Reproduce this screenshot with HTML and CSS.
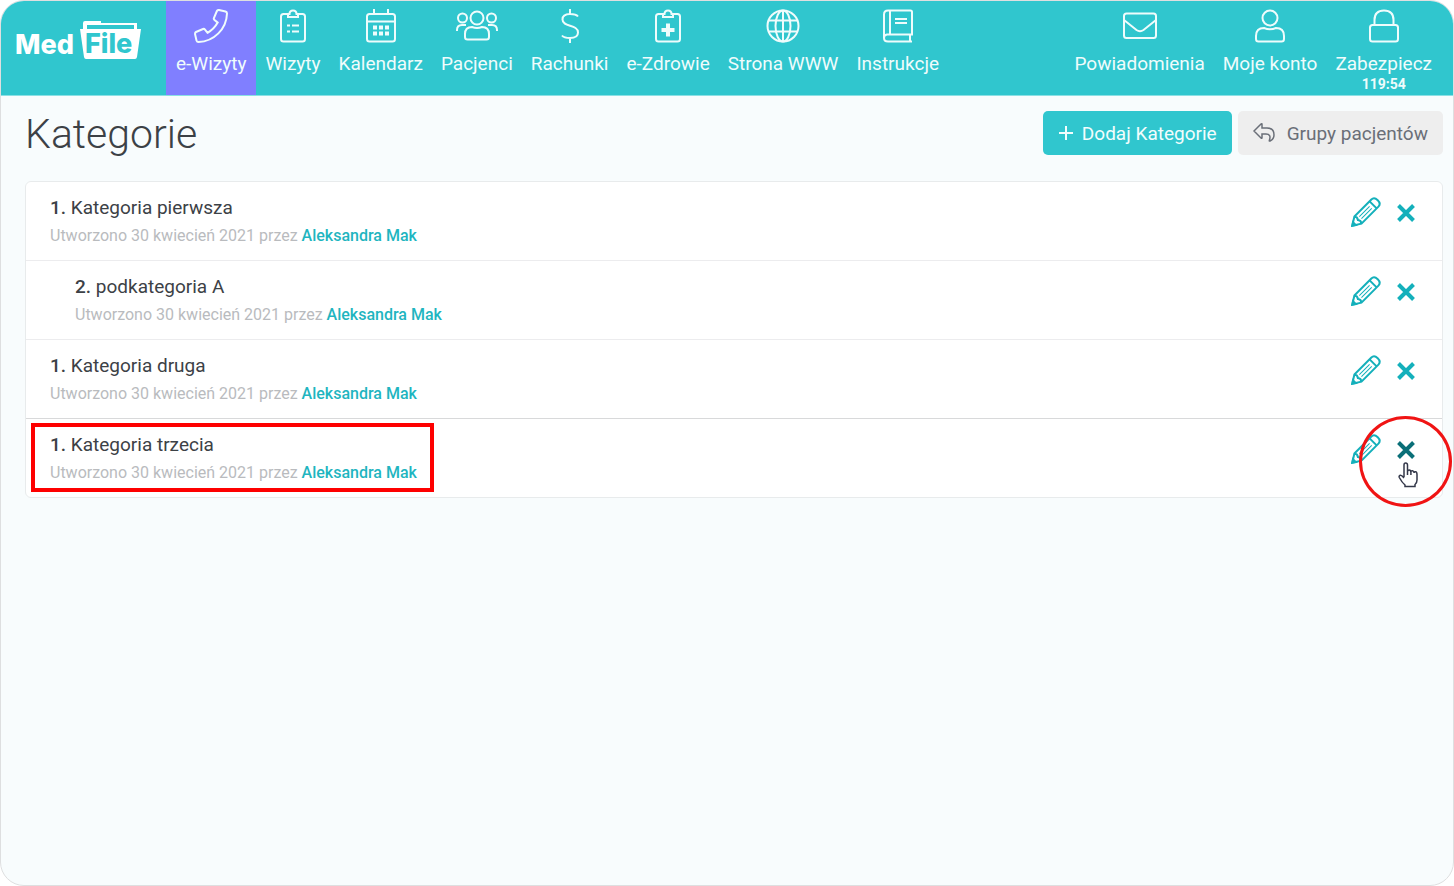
FILE: index.html
```
<!DOCTYPE html>
<html lang="pl">
<head>
<meta charset="utf-8">
<title>MedFile – Kategorie</title>
<link rel="stylesheet" href="styles.css">
</head>
<body>
<svg class="defs" aria-hidden="true">
  <symbol id="pencil" viewBox="0 0 30 30">
    <g transform="rotate(45 15 15)">
      <path d="M10 1q0-4 5-4t5 4V25l-5 8-5-8z M10 3.500h10M10 25q2.500-2 5 0 2.500-2 5 0"/>
      <path class="thin" d="M13.500 7v14.500M16.500 7v14.500"/>
      <path class="fill" d="M13 30h4l-2 3z"/>
    </g>
  </symbol>
  <symbol id="cross" viewBox="0 0 20 20"><path d="M2.500 2.500L17.500 17.500M17.500 2.500L2.500 17.500"/></symbol>
</svg>
<div class="app">
  <header class="topbar">
    <a class="logo" href="#" aria-label="MedFile">
      <svg width="126" height="42" viewBox="0 0 126 42">
        <path fill="#fff" d="M67 4q0-2 2-2h16v2h36v6h4l-4 28q-.4 2-2 2H70q-1.600 0-2-2L64 10h3z"/>
        <path fill="#30c6ce" d="M71 6h47v4H71z"/>
        <text class="logo-text med" x="-1" y="35">Med</text>
        <text class="logo-text file" x="69" y="34">File</text>
      </svg>
    </a>
    <nav class="nav">
      <a class="item active" href="#"><svg class="icon" viewBox="0 0 34 34"><path d="M25 1l6.500 1.500q1.500.5 1.500 2C32.500 20 20 32.500 4.500 33q-1.500 0-2-1.500L1 25q0-1.500 1-2l7-3q1.200-.4 2 .6l2.500 3.200q6.500-3.500 10.200-10.200L20.500 11q-1-.8-.6-2l3-7q.6-1.200 2.100-1z"/></svg><span>e-Wizyty</span></a>
      <a class="item" href="#"><svg class="icon" viewBox="0 0 34 34"><path d="M12 5H7.500Q5 5 5 7.500V30q0 2.500 2.500 2.500h19Q29 32.500 29 30V7.500Q29 5 26.500 5H22M12 5v3h10V5h-1.500q0-3.500-3.500-3.500T13.500 5z"/><path d="M11 16.500h3M16 16.500h7M11 22.500h3M16 22.500h7"/></svg><span>Wizyty</span></a>
      <a class="item" href="#"><svg class="icon" viewBox="0 0 34 34"><rect x="3" y="5" width="28" height="27.500" rx="2.500"/><path d="M3 12.500h28M10 0v5M24 0v5"/><path class="thick" d="M9 18.500h4M15 18.500h4M21 18.500h4M9 24.500h4M15 24.500h4M21 24.500h4"/></svg><span>Kalendarz</span></a>
      <a class="item" href="#"><svg class="icon wide" viewBox="0 0 42 34"><circle cx="21" cy="9" r="6.500"/><circle cx="6.500" cy="9" r="4.500"/><circle cx="35.500" cy="9" r="4.500"/><path d="M9 28v-3q0-7 7-7 5 2 10 0 7 0 7 7v3q0 2.500-2.500 2.500h-19Q9 30.500 9 28zM1 22v-1q0-5 5-5h4M41 22v-1q0-5-5-5h-4"/></svg><span>Pacjenci</span></a>
      <a class="item" href="#"><svg class="icon" viewBox="0 0 34 34"><path d="M17 0v5M17 29v5M25 7.500Q23 5 17 5 9.500 5 9.500 10.500c0 8 15.500 4.500 15.500 13Q25 29 17 29q-6 0-8-2.500"/></svg><span>Rachunki</span></a>
      <a class="item" href="#"><svg class="icon" viewBox="0 0 34 34"><path d="M12 5H7.500Q5 5 5 7.500V30q0 2.500 2.500 2.500h19Q29 32.500 29 30V7.500Q29 5 26.500 5H22M12 5v3h10V5h-1.500q0-3.500-3.500-3.500T13.500 5z"/><path class="thick" d="M17 14.500v13M10.500 21h13"/></svg><span>e-Zdrowie</span></a>
      <a class="item" href="#"><svg class="icon" viewBox="0 0 34 34"><circle cx="17" cy="17" r="15.500"/><ellipse cx="17" cy="17" rx="7.500" ry="15.500"/><path d="M17 1.500v31M2.500 11.500h29M2.500 22.500h29"/></svg><span>Strona WWW</span></a>
      <a class="item" href="#"><svg class="icon" viewBox="0 0 34 34"><path d="M7 1.500h22.500Q31 1.500 31 3v22.500H6Q3 26 3 29V5.500Q3 1.500 7 1.500zM9 1.500v24M3 29q0 3.500 4 3.500h24M29 25.500v7"/><path d="M14 10h12M14 14h12"/></svg><span>Instrukcje</span></a>
    </nav>
    <nav class="nav nav-end">
      <a class="item" href="#"><svg class="icon" viewBox="0 0 34 34"><rect x="1" y="4.500" width="32" height="24.500" rx="2.500"/><path d="M1 11l12.500 10q3.500 2.500 7 0L33 11"/></svg><span>Powiadomienia</span></a>
      <a class="item" href="#"><svg class="icon" viewBox="0 0 34 34"><circle cx="17" cy="9" r="7.500"/><path d="M3 30v-3q0-8 8-8 6 2.500 12 0 8 0 8 8v3q0 2.500-2.500 2.500h-23Q3 32.500 3 30z"/></svg><span>Moje konto</span></a>
      <a class="item" href="#"><svg class="icon" viewBox="0 0 34 34"><rect x="3" y="16" width="28" height="16.500" rx="2.500"/><path d="M7.500 16v-5q0-9.500 9.500-9.500T26.500 11v5"/></svg><span>Zabezpiecz</span><b class="timer">119:54</b></a>
    </nav>
  </header>
  <main class="page">
    <div class="heading">
      <h1>Kategorie</h1>
      <div class="actions">
        <button class="btn primary" type="button"><svg width="16" height="16" viewBox="0 0 16 16"><path d="M8 1v14M1 8h14"/></svg>Dodaj Kategorie</button>
        <button class="btn" type="button"><svg class="reply" width="22" height="22" viewBox="0 0 22 22"><path d="M1 9L8 2q1-.8 1 .6V6h5q7 0 7 7 0 4-4 6-1 .4-.6-.8Q18.500 12 13 12H9v3.500q0 1.400-1 .5z"/></svg>Grupy pacjentów</button>
      </div>
    </div>
    <ul class="list">
      <li class="row">
        <div class="info"><p class="title"><b>1.</b> Kategoria pierwsza</p><p class="meta">Utworzono 30 kwiecień 2021 przez <a href="#">Aleksandra Mak</a></p></div>
        <div class="tools"><button type="button" aria-label="Edytuj"><svg class="pencil"><use href="#pencil"/></svg></button><button type="button" aria-label="Usuń"><svg class="cross"><use href="#cross"/></svg></button></div>
      </li>
      <li class="row">
        <div class="info nested"><p class="title"><b>2.</b> podkategoria A</p><p class="meta">Utworzono 30 kwiecień 2021 przez <a href="#">Aleksandra Mak</a></p></div>
        <div class="tools"><button type="button" aria-label="Edytuj"><svg class="pencil"><use href="#pencil"/></svg></button><button type="button" aria-label="Usuń"><svg class="cross"><use href="#cross"/></svg></button></div>
      </li>
      <li class="row">
        <div class="info"><p class="title"><b>1.</b> Kategoria druga</p><p class="meta">Utworzono 30 kwiecień 2021 przez <a href="#">Aleksandra Mak</a></p></div>
        <div class="tools"><button type="button" aria-label="Edytuj"><svg class="pencil"><use href="#pencil"/></svg></button><button type="button" aria-label="Usuń"><svg class="cross"><use href="#cross"/></svg></button></div>
      </li>
      <li class="row">
        <div class="info"><p class="title"><b>1.</b> Kategoria trzecia</p><p class="meta">Utworzono 30 kwiecień 2021 przez <a href="#">Aleksandra Mak</a></p></div>
        <div class="tools"><button type="button" aria-label="Edytuj"><svg class="pencil"><use href="#pencil"/></svg></button><button class="hovered" type="button" aria-label="Usuń"><svg class="cross"><use href="#cross"/></svg></button></div>
        <span class="mark-box"></span>
        <span class="mark-circle"></span>
        <svg class="pointer" width="20" height="26" viewBox="0 0 20 26"><path d="M6 15V3q0-2 1.700-2T9.500 3v7q0-2 1.700-2t1.700 2.500q0-2 1.600-1.800t1.600 2.300q.2-1.500 1.500-1.300T19 12.500V18q0 3-2 4.500V24.500H7V23Q4 20.500 1.300 15.500q-.6-1.500.7-2.200 1.500-.5 4 2.700M9.500 9v4M12.900 10v3"/></svg>
      </li>
    </ul>
  </main>
</div>
</body>
</html>
```
FILE: styles.css
```
* { box-sizing: border-box; }
body { margin: 0; background: #fff; font-family: Roboto, "Liberation Sans", sans-serif; font-size: 19px; color: #3c4146; }
a { text-decoration: none; }
button { font: inherit; border: 0; cursor: pointer; }
svg { fill: none; stroke: currentColor; display: block; flex: none; }
.defs { position: absolute; width: 0; height: 0; }

.app { min-height: 100vh; border: 1px solid #dedfe0; border-radius: 24px; background: #f8fcfd; overflow: hidden; }

.topbar { display: flex; min-height: 95px; padding-right: 12px; background: #30c6ce; border-bottom: 1px solid #8be0e4; }
.logo { width: 165px; padding: 18px 0 0 15px; }
.logo svg { stroke: none; }
.logo-text { font-family: Inter, "Open Sans", sans-serif; font-size: 27px; font-weight: 800; }
.logo-text.med { fill: #fff; }
.logo-text.file { fill: #30c6ce; }
.nav { display: flex; }
.nav-end { margin-left: auto; }
.item { display: flex; flex-direction: column; align-items: center; padding: 8px 9px 0; color: #effcfc; line-height: 24px; white-space: nowrap; }
.item.active { padding-left: 10px; padding-right: 10px; background: #807fff; }
.icon { width: 34px; height: 34px; margin-bottom: 9px; stroke-width: 2; }
.icon.wide { width: 42px; }
.icon .thick { stroke-width: 4; }
.timer { font-size: 14px; line-height: 16px; }

.page { padding: 15px 10px 24px 24px; }
.heading { display: flex; justify-content: space-between; align-items: flex-start; }
h1 { margin: 0; font-size: 41px; line-height: 46px; font-weight: 300; }
.actions { display: flex; gap: 6px; }
.btn { display: flex; align-items: center; gap: 8px; height: 44px; padding: 0 15px; border-radius: 5px; background: #eee; color: #6a6f78; }
.btn svg { stroke-width: 1.5; }
.btn .reply { margin-right: 4px; }
.btn.primary { background: #30c6ce; color: #f2fdfd; }
.btn.primary svg { stroke-width: 2; }

.list { margin: 24px 0 0; padding: 0; list-style: none; background: #fff; border: 1px solid #e8ebec; border-radius: 6px; }
.row { position: relative; display: flex; justify-content: space-between; padding: 14px 26px 12px 24px; border-bottom: 1px solid #ececee; }
.row:nth-child(3) { border-bottom-color: #d8d9da; }
.row:last-child { border-bottom: 0; }
.nested { padding-left: 25px; }
.title, .meta { margin: 0; line-height: 24px; }
.title { margin-bottom: 4px; }
.title b { font-weight: 500; }
.meta { font-size: 16px; color: #b9bbbe; }
.meta a { color: #1fb5c0; font-weight: 500; }
.tools { display: flex; align-items: flex-start; gap: 16px; padding-top: 2px; }
.tools button { display: flex; align-items: center; height: 30px; padding: 0; background: none; color: #14b0bb; }
.tools button.hovered { color: #0a6f78; }
.pencil { width: 30px; height: 30px; stroke-width: 2; }
.pencil, #pencil { overflow: visible; }
#pencil .thin { stroke-width: 1; }
#pencil .fill { fill: currentColor; }
.cross { width: 20px; height: 20px; stroke-width: 4; }

.mark-box { position: absolute; left: 5px; top: 4px; width: 403px; height: 69px; border: 4px solid #fe0000; }
.mark-circle { position: absolute; right: -10px; top: -3px; width: 93px; height: 91px; border: 3px solid #f01414; border-radius: 50%; }
.pointer { position: absolute; right: 24px; top: 43px; stroke: #34384a; stroke-width: 1.5; }
.pointer path { fill: #fff; }
```
